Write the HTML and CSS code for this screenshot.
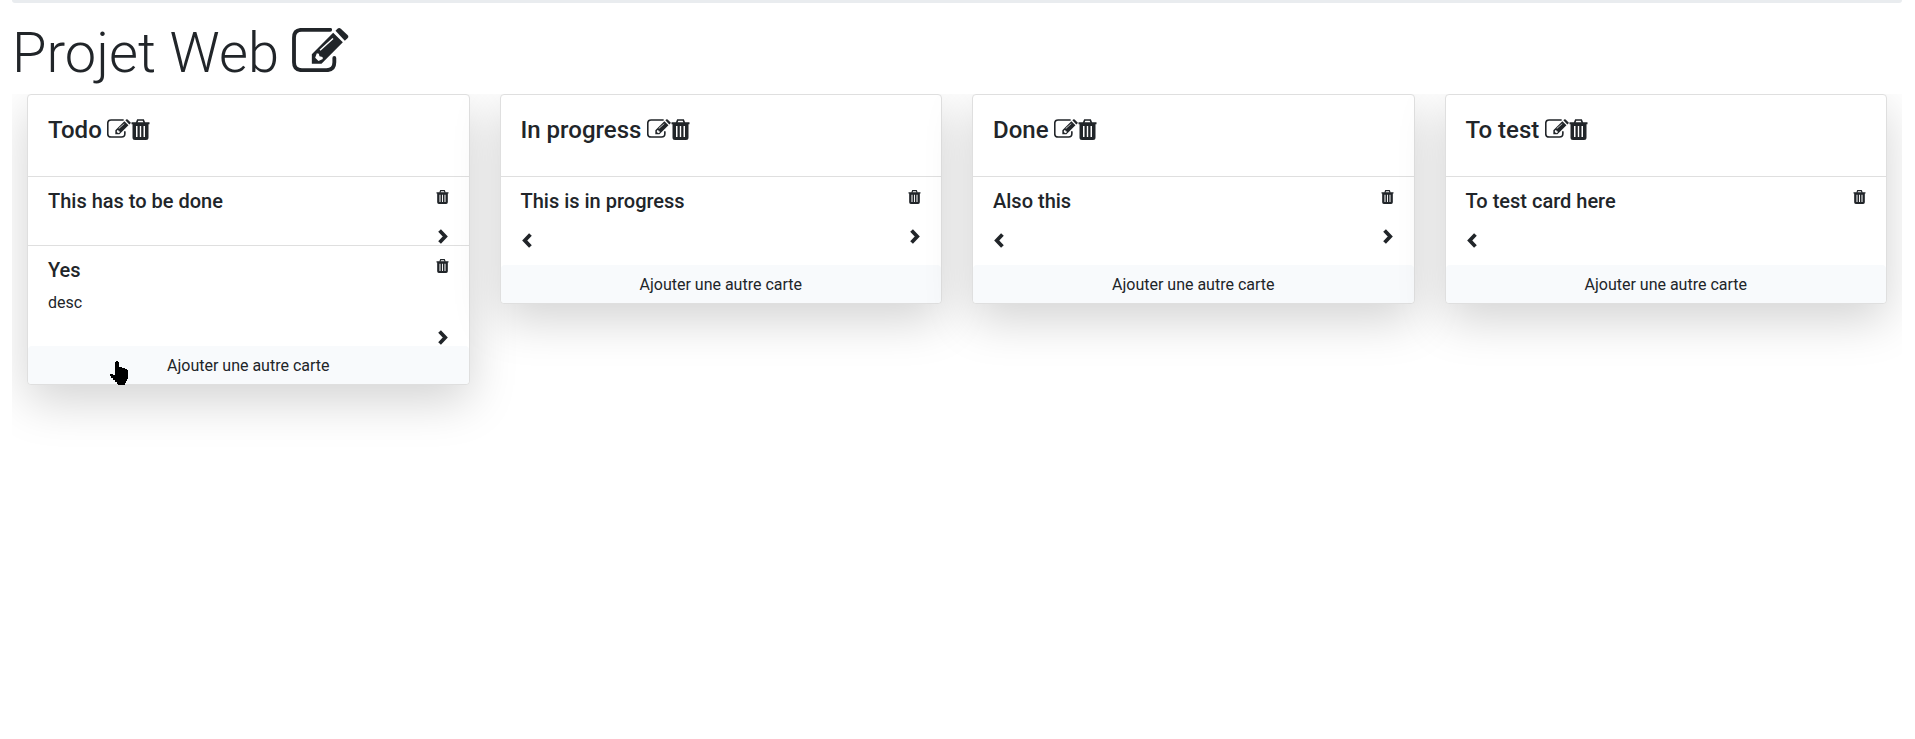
FILE: index.html
```html
<!DOCTYPE html>
<html lang="fr">
<head>
<meta charset="utf-8">
<title>Projet Web</title>
<link rel="stylesheet" href="styles.css">
</head>
<body>
<svg class="sprite" width="0" height="0">
  <symbol id="edit" viewBox="0 0 170 132">
    <path d="M114 5.500H29Q5.500 5.500 5.500 29V103Q5.500 126.500 29 126.500H103Q126.500 126.500 126.500 103V90" fill="none" stroke="currentColor" stroke-width="11.500" stroke-linecap="round"/>
    <path fill="currentColor" fill-rule="evenodd" d="M59 107V79L123 14L152 43L88 107ZM69 89L79 99L92 93L91 87L82 85L80 77L74 76ZM82 65L85 68L124 33L121 30Z"/>
    <path fill="currentColor" d="M130 8L136 2Q141-2 146 2L166 21Q171 26 166 31L158 38Z"/>
  </symbol>
  <symbol id="trash" viewBox="0 0 19 21">
    <path fill="none" stroke="currentColor" stroke-width="1.700" d="M5.500 4L6.700 1H12.300L13.500 4"/>
    <path fill="currentColor" fill-rule="evenodd" d="M.5 3.200H18.500V5.200H17.500V18.500Q17.500 21 15 21H4Q1.500 21 1.500 18.500V5.200H.5ZM5 7V18H6.500V7ZM8.800 7V18H10.200V7ZM12.500 7V18H14V7Z"/>
  </symbol>
  <symbol id="chevron" viewBox="0 0 9 14">
    <path fill="none" stroke="currentColor" stroke-width="3.500" d="M1.300 1.400L6.600 7L1.300 12.600"/>
  </symbol>
</svg>
<div class="topbar"></div>
<h1 class="project-title">Projet Web<svg class="edit-lg"><use href="#edit"/></svg></h1>
<main class="board">
  <section class="column">
    <div class="card">
      <header class="card-head"><h4>Todo</h4><svg class="edit-sm"><use href="#edit"/></svg><svg class="trash-md"><use href="#trash"/></svg></header>
      <div class="item item-short">
        <div class="item-text"><h5>This has to be done</h5></div>
        <div class="item-actions"><svg class="trash-sm"><use href="#trash"/></svg><svg class="next"><use href="#chevron"/></svg></div>
      </div>
      <div class="item item-tall">
        <div class="item-text"><h5>Yes</h5><p>desc</p></div>
        <div class="item-actions"><svg class="trash-sm"><use href="#trash"/></svg><svg class="next next-low"><use href="#chevron"/></svg></div>
      </div>
      <button class="add">Ajouter une autre carte</button>
    </div>
  </section>
  <section class="column">
    <div class="card">
      <header class="card-head"><h4>In progress</h4><svg class="edit-sm"><use href="#edit"/></svg><svg class="trash-md"><use href="#trash"/></svg></header>
      <div class="item">
        <div class="item-text"><h5>This is in progress</h5><svg class="prev"><use href="#chevron"/></svg></div>
        <div class="item-actions"><svg class="trash-sm"><use href="#trash"/></svg><svg class="next"><use href="#chevron"/></svg></div>
      </div>
      <button class="add">Ajouter une autre carte</button>
    </div>
  </section>
  <section class="column">
    <div class="card">
      <header class="card-head"><h4>Done</h4><svg class="edit-sm"><use href="#edit"/></svg><svg class="trash-md"><use href="#trash"/></svg></header>
      <div class="item">
        <div class="item-text"><h5>Also this</h5><svg class="prev"><use href="#chevron"/></svg></div>
        <div class="item-actions"><svg class="trash-sm"><use href="#trash"/></svg><svg class="next"><use href="#chevron"/></svg></div>
      </div>
      <button class="add">Ajouter une autre carte</button>
    </div>
  </section>
  <section class="column">
    <div class="card">
      <header class="card-head"><h4>To test</h4><svg class="edit-sm"><use href="#edit"/></svg><svg class="trash-md"><use href="#trash"/></svg></header>
      <div class="item">
        <div class="item-text"><h5>To test card here</h5><svg class="prev"><use href="#chevron"/></svg></div>
        <div class="item-actions"><svg class="trash-sm"><use href="#trash"/></svg></div>
      </div>
      <button class="add">Ajouter une autre carte</button>
    </div>
  </section>
</main>
<svg class="pointer" viewBox="0 0 18 24"><path d="M5 1H6V0H8V1H9V6H12V7H15V8H17V9H18V18H17V20H16V22H15V24H8V23H7V21H5V19H3V17H1V15H0V13H3V14H5Z"/></svg>
</body>
</html>
```
FILE: styles.css
```css
* { box-sizing: border-box; }

body {
  margin: 0;
  padding: 0 13px 0 12px;
  height: 739px;
  overflow: hidden;
  background: #fff;
  color: #212529;
  font: 400 16px/1.5 Roboto, sans-serif;
}

h1, h4, h5, p { margin: 0; }
svg { display: block; flex: none; }
.sprite { position: absolute; }

.topbar {
  height: 3px;
  background: #e9ecef;
  border-radius: 0 0 4px 4px;
}

.project-title {
  display: flex;
  align-items: flex-start;
  height: 91px;
  padding-top: 17px;
  font-size: 56px;
  font-weight: 300;
  line-height: 67.2px;
}

.edit-lg { width: 57px; height: 44px; margin: 8px 0 0 13px; }

.board {
  display: flex;
  height: 645px;
  overflow: hidden;
}

.column { flex: 0 0 25%; padding: 0 15px; }

.card {
  position: relative;
  background: #fff;
  border: 1px solid #dfdfdf;
  border-radius: 4px;
  box-shadow: 0 16px 48px rgba(0, 0, 0, .175);
}

.card-head {
  display: flex;
  height: 82px;
  padding: 21px 20px 20px;
  border-bottom: 1px solid #dfdfdf;
}

.card-head h4 { font-size: 24px; font-weight: 500; line-height: 28.8px; }
.edit-sm { width: 24px; height: 19px; margin: 3px 0 0 5.5px; }
.trash-md { width: 19px; height: 21px; margin: 3px 0 0 .2px; }

.item {
  display: flex;
  justify-content: space-between;
  height: 88px;
  padding: 12px 20px 0;
}

.item-short { height: 69px; border-bottom: 1px solid #dfdfdf; }
.item-tall { height: 100px; }
.item h5 { font-size: 20px; font-weight: 500; line-height: 24px; }
.item p { margin-top: 9px; }
.item-actions { display: flex; flex-direction: column; align-items: flex-end; }
.trash-sm { width: 13px; height: 14px; margin-top: 1px; }
.next { width: 10px; height: 15px; margin: 25px 1px 0 0; }
.next-low { margin-top: 57px; }
.prev { width: 10px; height: 15px; margin: 20px 0 0 1px; transform: scaleX(-1); }

.add {
  display: block;
  width: 100%;
  height: 38px;
  padding: 8px 12px 6px;
  border: 0;
  border-radius: 4px;
  background: #f8fafc;
  color: inherit;
  font: inherit;
}

.pointer { position: absolute; left: 110px; top: 361px; width: 18px; height: 24px; }
```
